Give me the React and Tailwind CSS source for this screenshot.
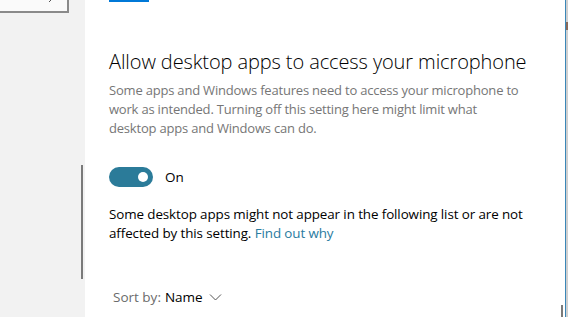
import React from 'react';

const font = { fontFamily: '"Open Sans", "Noto Sans", sans-serif' };

const Toggle = () => (
  <div className="flex items-center gap-3">
    <div className="flex h-[20px] w-[44px] items-center justify-end rounded-full bg-[#2b7b99] pr-[5px]">
      <div className="h-[10px] w-[10px] rounded-full bg-white" />
    </div>
    <span className="text-[13.5px] text-black">On</span>
  </div>
);

export default function App() {
  return (
    <div className="flex h-[317px] w-[568px] overflow-hidden bg-white" style={font}>
      {/* left nav pane */}
      <div className="flex w-[85px] shrink-0 flex-col bg-[#f2f2f2]">
        <div className="relative h-[13px] w-[69px] border-b-2 border-r-2 border-[#8a8a8a] bg-[#fafafa]">
          <svg className="absolute left-[47px] top-[-3px]" width="8" height="8" viewBox="0 0 8 8">
            <path d="M6 1 L2 5" stroke="#555" strokeWidth="1" />
          </svg>
        </div>
        <div className="ml-[81px] mt-[152px] h-[114px] w-[2px] bg-[#7a7a7a]" />
      </div>

      {/* main content */}
      <div className="flex flex-1">
        <div className="flex flex-1 flex-col pl-[24px]">
          <div className="h-[2px] w-[40px] bg-[#0078d7]" />
          <h1 className="mt-[46px] text-[20px] leading-[28px] font-light tracking-[-0.1px] text-black">
            Allow desktop apps to access your microphone
          </h1>
          <p className="mt-[5px] whitespace-nowrap text-[13px] leading-[19px] tracking-[-0.2px] text-[#767676]">
            Some apps and Windows features need to access your microphone to
            <br />
            work as intended. Turning off this setting here might limit what
            <br />
            desktop apps and Windows can do.
          </p>
          <div className="mt-[29px]">
            <Toggle />
          </div>
          <p className="mt-[18px] whitespace-nowrap text-[13.4px] leading-[19px] tracking-[-0.1px] text-black">
            Some desktop apps might not appear in the following list or are not
            <br />
            affected by this setting. <span className="text-[#2a7ba0]">Find out why</span>
          </p>
          <div className="mt-[44px] flex items-center pl-[4px] text-[13.5px]">
            <span className="text-[#6b6b6b]">Sort by:</span>
            <span className="ml-[4px] text-black">Name</span>
            <svg className="ml-[6px]" width="13" height="8" viewBox="0 0 13 8">
              <path d="M1 1.5 L6.5 7 L12 1.5" fill="none" stroke="#555" strokeWidth="1" />
            </svg>
          </div>
        </div>
        <div className="flex w-[4px] flex-col">
          <div className="mt-[305px] h-[12px] w-[2px] bg-[#7a7a7a]" />
        </div>
      </div>

      {/* window edge */}
      <div className="w-[1px] bg-[#3b87b8]" />
      <div className="flex w-[2px] flex-col bg-[#d0d0d0]">
        <div className="mt-[22px] h-[8px] w-[2px] bg-[#8a6a5a]" />
      </div>
    </div>
  );
}
